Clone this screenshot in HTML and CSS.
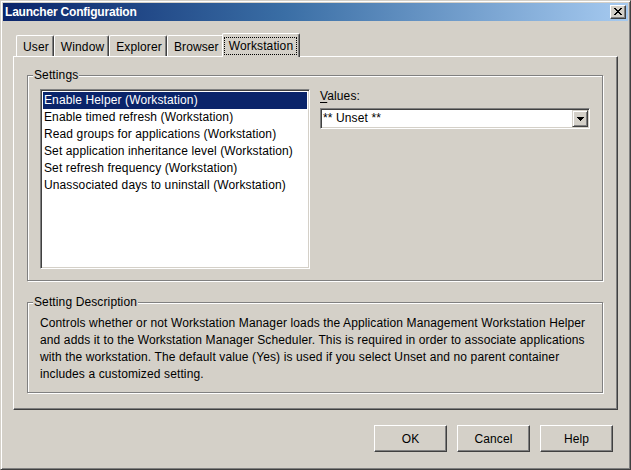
FILE: index.html
```html
<!DOCTYPE html>
<html>
<head>
<meta charset="utf-8">
<title>Launcher Configuration</title>
<link rel="stylesheet" href="styles.css">
</head>
<body>
<div class="window">
  <div class="titlebar">
    <span class="title">Launcher Configuration</span>
    <span class="close">
      <svg width="8" height="7" viewBox="0 0 8 7" shape-rendering="crispEdges"><path fill="#000" d="M0 0h2v1H0z M6 0h2v1H6z M1 1h2v1H1z M5 1h2v1H5z M2 2h4v1H2z M3 3h2v1H3z M2 4h4v1H2z M1 5h2v1H1z M5 5h2v1H5z M0 6h2v1H0z M6 6h2v1H6z"/></svg>
    </span>
  </div>
  <div class="main">
    <div class="tabs">
      <div class="tab"><span class="tab-label">User</span></div>
      <div class="tab"><span class="tab-label">Window</span></div>
      <div class="tab"><span class="tab-label">Explorer</span></div>
      <div class="tab"><span class="tab-label">Browser</span></div>
      <div class="tab tab-active"><span class="tab-label tab-focus">Workstation</span></div>
    </div>
    <div class="panel">
      <div class="group group-settings">
        <div class="legend">Settings</div>
        <div class="settings-row">
          <ul class="listbox">
            <li class="item item-selected">Enable Helper (Workstation)</li>
            <li class="item">Enable timed refresh (Workstation)</li>
            <li class="item">Read groups for applications (Workstation)</li>
            <li class="item">Set application inheritance level (Workstation)</li>
            <li class="item">Set refresh frequency (Workstation)</li>
            <li class="item">Unassociated days to uninstall (Workstation)</li>
          </ul>
          <div class="values">
            <div class="values-label"><u>V</u>alues:</div>
            <div class="combo">
              <span class="combo-text">** Unset **</span>
              <span class="combo-btn">
                <svg width="7" height="4" viewBox="0 0 7 4" shape-rendering="crispEdges"><path fill="#000" d="M0 0h7v1H0z M1 1h5v1H1z M2 2h3v1H2z M3 3h1v1H3z"/></svg>
              </span>
            </div>
          </div>
        </div>
      </div>
      <div class="group group-desc">
        <div class="legend">Setting Description</div>
        <p class="desc">Controls whether or not Workstation Manager loads the Application Management Workstation Helper<br>and adds it to the Workstation Manager Scheduler. This is required in order to associate applications<br>with the workstation. The default value (Yes) is used if you select Unset and no parent container<br>includes a customized setting.</p>
      </div>
    </div>
    <div class="buttons">
      <button class="btn">OK</button>
      <button class="btn">Cancel</button>
      <button class="btn">Help</button>
    </div>
  </div>
</div>
</body>
</html>
```
FILE: styles.css
```css
html, body {
  margin: 0;
  padding: 0;
  background: #d4d0c8;
}

body {
  font-family: "Liberation Sans", Arial, sans-serif;
  font-size: 12px;
  letter-spacing: 0.12px;
  color: #000;
}

.window {
  width: 631px;
  height: 470px;
  box-sizing: border-box;
  border: 1px solid;
  border-color: #d4d0c8 #404040 #404040 #d4d0c8;
  box-shadow: inset 1px 1px 0 #fff, inset -1px -1px 0 #808080;
  padding: 2px;
  background: #d4d0c8;
  display: flex;
  flex-direction: column;
}

.titlebar {
  height: 18px;
  flex: none;
  display: flex;
  align-items: flex-start;
  justify-content: space-between;
  background: linear-gradient(to right, #0a246a 0%, #3a6ea5 45%, #a6caf0 100%);
}

.title {
  color: #fff;
  font-weight: bold;
  font-size: 12px;
  letter-spacing: -0.2px;
  line-height: 18px;
  padding-left: 2px;
}

.close {
  width: 16px;
  height: 14px;
  box-sizing: border-box;
  margin: 2px 2px 0 0;
  background: #d4d0c8;
  border: 1px solid;
  border-color: #fff #404040 #404040 #fff;
  box-shadow: inset -1px -1px 0 #808080;
  display: flex;
  align-items: center;
  justify-content: center;
}

.close svg {
  display: block;
  margin-left: -1px;
  margin-top: -1px;
}

.main {
  flex: 1;
  display: flex;
  flex-direction: column;
  padding: 12px 10px 0 10px;
}

.tabs {
  display: flex;
  align-items: flex-end;
  margin-left: 3px;
  height: 23px;
}

.tab {
  height: 21px;
  box-sizing: border-box;
  padding: 2px 0 0 1px;
  border-top: 1px solid #fff;
  border-left: 1px solid #fff;
  border-right: 1px solid #404040;
  border-top-left-radius: 2px;
  border-top-right-radius: 2px;
  box-shadow: inset -1px 0 0 #808080;
  background: #d4d0c8;
}

.tab-label {
  display: inline-block;
  padding: 1px 3px 1px 4px;
  line-height: 14px;
  border: 1px dotted transparent;
}

.tab-active {
  position: relative;
  z-index: 1;
  height: 24px;
  margin: 0 -2px -1px -2px;
  padding: 3px 2px 0 1px;
}

.tab-focus {
  border-color: #000;
}

.panel {
  height: 354px;
  box-sizing: border-box;
  border: 1px solid;
  border-color: #fff #404040 #404040 #fff;
  box-shadow: inset -1px -1px 0 #808080;
  padding: 18px 14px 0 13px;
}

.group {
  border: 1px solid #808080;
  box-shadow: inset 1px 1px 0 #fff, 1px 1px 0 #fff;
  box-sizing: border-box;
}

.group-settings {
  height: 206px;
}

.group-desc {
  height: 91px;
  margin-top: 21px;
}

.legend {
  width: fit-content;
  margin: -8px 0 0 5px;
  padding: 0 1px;
  line-height: 14px;
  background: #d4d0c8;
}

.settings-row {
  display: flex;
  gap: 10px;
  margin: 7px 11px 0 12px;
}

.listbox {
  list-style: none;
  margin: 0;
  width: 270px;
  height: 180px;
  box-sizing: border-box;
  padding: 1px 2px 1px 1px;
  background: #fff;
  border: 1px solid;
  border-color: #808080 #fff #fff #808080;
  box-shadow: inset 1px 1px 0 #404040, inset -1px -1px 0 #d4d0c8;
}

.listbox .item:first-child {
  margin-top: 1px;
}

.item {
  height: 17px;
  line-height: 17px;
  padding-left: 1px;
  margin-left: 1px;
  white-space: nowrap;
}

.item-selected {
  background: #0a246a;
  color: #fff;
}

.values {
  width: 270px;
  display: flex;
  flex-direction: column;
}

.values-label {
  line-height: 14px;
  margin-bottom: 5px;
}

.values-label u {
  text-underline-offset: 2px;
}

.combo {
  height: 21px;
  box-sizing: border-box;
  display: flex;
  background: #fff;
  border: 1px solid;
  border-color: #808080 #fff #fff #808080;
  box-shadow: inset 1px 1px 0 #404040, inset -1px -1px 0 #d4d0c8;
  padding: 1px;
}

.combo-text {
  flex: 1;
  line-height: 17px;
  padding-left: 1px;
}

.combo-btn {
  width: 16px;
  height: 17px;
  box-sizing: border-box;
  background: #d4d0c8;
  border: 1px solid;
  border-color: #d4d0c8 #404040 #404040 #d4d0c8;
  box-shadow: inset 1px 1px 0 #fff, inset -1px -1px 0 #808080;
  display: flex;
  align-items: center;
  justify-content: center;
}

.combo-btn svg {
  display: block;
  margin-top: 1px;
}

.desc {
  margin: 6px 0 0 12px;
  line-height: 17px;
  white-space: nowrap;
}

.buttons {
  display: flex;
  justify-content: flex-end;
  gap: 10px;
  margin-top: 15px;
  padding-right: 5px;
}

.btn {
  width: 73px;
  height: 27px;
  box-sizing: border-box;
  margin: 0;
  padding: 0;
  font-family: "Liberation Sans", Arial, sans-serif;
  font-size: 12px;
  letter-spacing: 0.12px;
  color: #000;
  background: #d4d0c8;
  border: 1px solid;
  border-color: #fff #404040 #404040 #fff;
  box-shadow: inset -1px -1px 0 #808080;
  border-radius: 0;
}
```
